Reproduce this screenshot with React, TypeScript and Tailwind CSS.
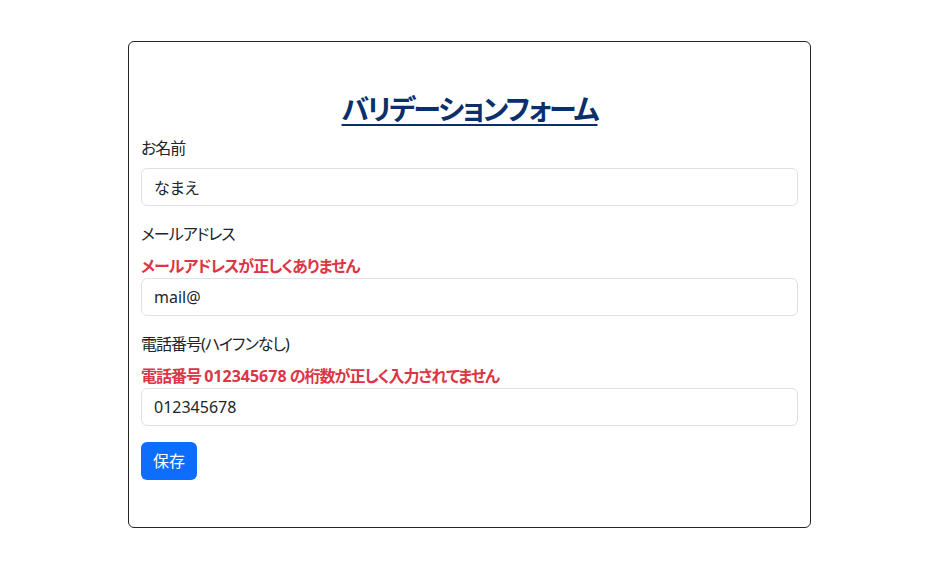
import React, { useState } from "react";

const font = "font-['Noto_Sans','Noto_Sans_CJK_JP',sans-serif] [font-feature-settings:'palt']";

const Field = ({
  label,
  value,
  error,
  onChange,
}: {
  label: string;
  value: string;
  error?: React.ReactNode;
  onChange: (v: string) => void;
}) => {
  return (
    <div className="mb-4">
      <label className="block mb-2 text-base leading-6 tracking-[-1px] text-[#212529]">{label}</label>
      {error && (
        <div className="text-base leading-6 font-bold tracking-[-1px] text-[#dc3545]">{error}</div>
      )}
      <input
        className="block w-full h-[38px] px-3 py-1.5 text-base leading-6 text-[#212529] bg-white border border-[#dee2e6] rounded-md outline-none"
        value={value}
        onChange={(e) => onChange(e.target.value)}
      />
    </div>
  );
};

const App = () => {
  const [name, setName] = useState("なまえ");
  const [mail, setMail] = useState("mail@");
  const [tel, setTel] = useState("012345678");

  return (
    <div className={`min-h-screen bg-white pl-[128px] pt-[41px] ${font}`}>
      <div className="w-[683px] border border-[#212529] rounded-md px-3 pt-[50px] pb-[47px]">
        <h1 className="text-center text-[28px] leading-[34px] font-bold tracking-[-2px] text-[#0a2f6b] underline underline-offset-[4px] decoration-2 mb-[10px]">
          バリデーションフォーム
        </h1>
        <Field label="お名前" value={name} onChange={setName} />
        <Field
          label="メールアドレス"
          value={mail}
          onChange={setMail}
          error="メールアドレスが正しくありません"
        />
        <Field
          label="電話番号(ハイフンなし)"
          value={tel}
          onChange={setTel}
          error={
            <>
              電話番号 <span className="tracking-normal">{tel}</span> の桁数が正しく入力されてません
            </>
          }
        />
        <button className="h-[38px] px-3 text-base leading-6 text-white bg-[#0d6efd] rounded-md">
          保存
        </button>
      </div>
    </div>
  );
};

export default App;
